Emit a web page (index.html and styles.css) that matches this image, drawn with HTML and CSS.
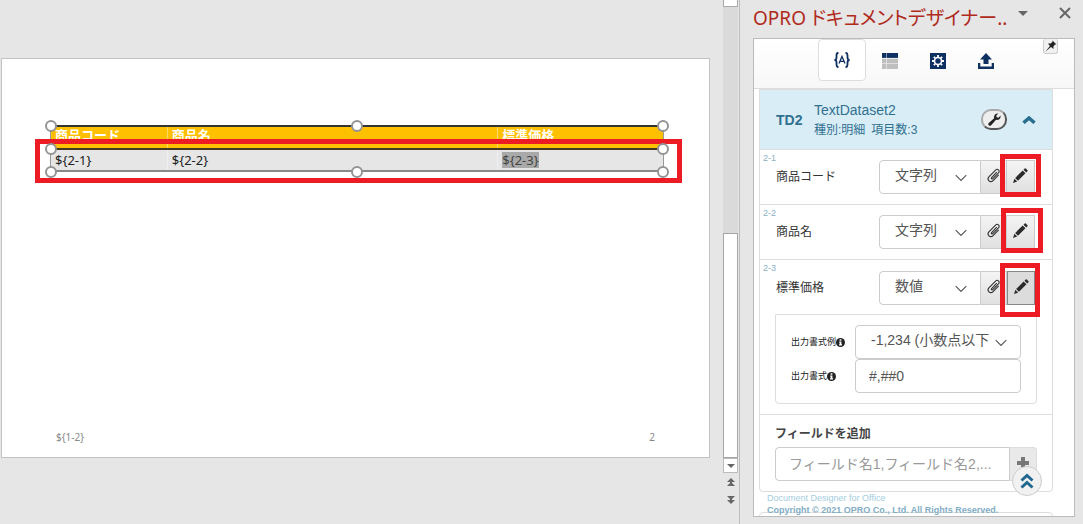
FILE: index.html
```html
<!DOCTYPE html>
<html lang="ja">
<head>
<meta charset="utf-8">
<title>OPRO ドキュメントデザイナー</title>
<link rel="stylesheet" href="styles.css">
</head>
<body>
<svg class="defs" aria-hidden="true">
  <symbol id="clip" viewBox="0 0 16 16"><path d="M11.500 4.500 6 10.200c-.8.9.4 2.100 1.300 1.200l6-6.200c2-2.200-.9-5.200-3.100-3L3.300 9.200c-3 3.200 1.200 7.300 4.300 4.200l5.900-6" fill="none" stroke="#333" stroke-width="1.200"/></symbol>
  <symbol id="pencil" viewBox="0 0 16 16"><path d="M0 16 1.500 11.500 4.500 14.500zM2.300 10.600 10.300 2.700l3 3-8 7.900zM11.200 1.900l1.300-1.300q.6-.6 1.200 0l1.700 1.700q.6.600 0 1.200l-1.300 1.300z" fill="#2b2b2b"/></symbol>
  <symbol id="down" viewBox="0 0 12 8"><path d="M.7 1.200 6 6.500l5.300-5.300" fill="none" stroke="#555" stroke-width="1.100"/></symbol>
  <symbol id="info" viewBox="0 0 10 10"><circle cx="5" cy="5" r="5" fill="#222"/><path d="M4 1.500h2V3H4zM3.500 4H6v3h.7v1.200H3.400V7H4V5.100h-.5z" fill="#fff"/></symbol>
</svg>
<div class="app">
  <main class="editor">
    <section class="slide">
      <div class="table-frame">
        <table class="slide-table">
          <colgroup><col class="col-code"><col class="col-name"><col class="col-price"></colgroup>
          <thead><tr><th>商品コード</th><th>商品名</th><th>標準価格</th></tr></thead>
          <tbody><tr><td>${2-1}</td><td>${2-2}</td><td><span class="selected">${2-3}</span></td></tr></tbody>
        </table>
        <div class="row-mark"></div>
        <i class="handle top left"></i><i class="handle top center"></i><i class="handle top right"></i>
        <i class="handle middle left"></i><i class="handle middle right"></i>
        <i class="handle bottom left"></i><i class="handle bottom center"></i><i class="handle bottom right"></i>
      </div>
      <footer class="slide-footer"><span>${1-2}</span><span>2</span></footer>
    </section>
  </main>
  <div class="scrollbar">
    <button class="scroll-up" aria-label="上へ"></button>
    <div class="track"></div>
    <div class="thumb"></div>
    <button class="scroll-down" aria-label="下へ"><svg width="8" height="4"><path d="M0 0h8L4 4z" fill="#666"/></svg></button>
    <button class="scroll-page" aria-label="前のスライド"><svg width="8" height="8"><path d="M4 0 8 4H0zM4 4l4 4H0zM3 3h2v3H3z" fill="#666"/></svg></button>
    <button class="scroll-page" aria-label="次のスライド"><svg width="8" height="8"><path d="M0 0h8L4 4zM0 4h8L4 8zM3 2h2v3H3z" fill="#666"/></svg></button>
  </div>
  <aside class="pane">
    <header class="pane-head">
      <h1 class="pane-title">OPRO ドキュメントデザイナー..</h1>
      <button class="plain pane-menu" aria-label="メニュー"><svg width="10" height="5"><path d="M0 0h10L5 5z" fill="#666"/></svg></button>
      <button class="plain" aria-label="閉じる"><svg width="12" height="12"><path d="m1 1 10 10m0-10L1 11" stroke="#666" stroke-width="2"/></svg></button>
    </header>
    <div class="panel">
      <nav class="tabs">
        <button class="tab active" aria-label="フィールド"><svg width="16" height="16" viewBox="0 0 16 16" fill="none" stroke="#0e3162"><path d="M4.500.8C2.500.8 2.500 2 2.500 3.500v2C2.500 7 2 8 .4 8c1.600 0 2.100 1 2.100 2.500v2c0 1.500 0 2.700 2 2.700M11.500.8c2 0 2 1.200 2 2.700v2c0 1.500.5 2.500 2.100 2.500-1.600 0-2.100 1-2.100 2.500v2c0 1.500 0 2.700-2 2.700" stroke-width="1.800"/><path d="M5 11.500 8 4.500l3 7M6 9.300h4" stroke-width="1.300"/></svg></button>
        <button class="tab" aria-label="一覧"><svg width="16" height="16" viewBox="0 0 16 16"><path d="M0 0h16v5H0z" fill="#0e3162"/><path d="M0 5.500h16V16H0z" fill="#bfbfbf"/><path d="M4.500 0v16M0 5.300h16M0 10.500h16" stroke="#fff" stroke-opacity=".7" stroke-width=".7"/></svg></button>
        <button class="tab" aria-label="設定"><svg width="16" height="16" viewBox="0 0 16 16"><path d="M0 0h16v16H0z" fill="#0e3162"/><circle cx="8" cy="8" r="3.500" fill="none" stroke="#fff" stroke-width="1.600"/><path d="M8 2v2M8 12v2M2 8h2M12 8h2M3.800 3.800l1.400 1.400M10.800 10.800l1.400 1.400M12.200 3.800l-1.400 1.400M5.200 10.800l-1.400 1.400" stroke="#fff" stroke-width="1.800"/></svg></button>
        <button class="tab" aria-label="アップロード"><svg width="16" height="16" viewBox="0 0 16 16" fill="#0e3162"><path d="M8 0l6 6.500h-3.500V11h-5V6.500H2zM0 10h2.300v3.500h11.400V10H16v6H0z"/></svg></button>
        <button class="pin" aria-label="固定"><svg width="12" height="12" viewBox="0 0 12 12"><path d="M7.500.5 11.500 4.500 10 4.600 8.400 6.500 8.500 9 6 7.100.5 11.500 4.900 6 3 3.500 5.500 3.600 7.400 2z" fill="#222"/></svg></button>
      </nav>
      <section class="card">
        <header class="card-head">
          <strong class="card-code">TD2</strong>
          <div class="card-info"><div class="card-name">TextDataset2</div><div class="card-meta">種別:明細&ensp;項目数:3</div></div>
          <button class="wrench" aria-label="設定"><svg width="13" height="13" viewBox="0 0 12 12"><path d="M.7 9.300 5.700 4.800C5 2.300 7 .1 9.600.5L7.700 2.400 8 4l1.600.3 2-1.900c.4 2.600-1.700 4.500-4.200 3.900L2.900 11.300C1.500 12.700-.7 10.700.7 9.300z" fill="#222"/></svg></button>
          <button class="plain toggle" aria-label="折りたたむ"><svg width="14" height="8" viewBox="0 0 14 8"><path d="M1.500 6.800 7 2l5.500 4.800" fill="none" stroke="#2a6f91" stroke-width="3.500"/></svg></button>
        </header>
        <div class="field">
          <span class="field-no">2-1</span>
          <label class="field-name" for="type1">商品コード</label>
          <div class="group"><div class="select-box"><select id="type1"><option>文字列</option></select><svg class="arrow"><use href="#down"/></svg></div><button class="tool clip" aria-label="添付"><svg><use href="#clip"/></svg></button><button class="tool edit" aria-label="編集"><svg><use href="#pencil"/></svg></button><i class="mark"></i></div>
        </div>
        <div class="field">
          <span class="field-no">2-2</span>
          <label class="field-name" for="type2">商品名</label>
          <div class="group"><div class="select-box"><select id="type2"><option>文字列</option></select><svg class="arrow"><use href="#down"/></svg></div><button class="tool clip" aria-label="添付"><svg><use href="#clip"/></svg></button><button class="tool edit" aria-label="編集"><svg><use href="#pencil"/></svg></button><i class="mark mark-wide"></i></div>
        </div>
        <div class="field">
          <span class="field-no">2-3</span>
          <label class="field-name" for="type3">標準価格</label>
          <div class="group"><div class="select-box"><select id="type3"><option>数値</option></select><svg class="arrow"><use href="#down"/></svg></div><button class="tool clip" aria-label="添付"><svg><use href="#clip"/></svg></button><button class="tool edit pressed" aria-label="編集"><svg><use href="#pencil"/></svg></button><i class="mark mark-tall"></i></div>
        </div>
        <div class="format">
          <label class="format-label" for="sample">出力書式例<svg><use href="#info"/></svg></label>
          <div class="select-box"><select id="sample"><option>-1,234 (小数点以下</option></select><svg class="arrow"><use href="#down"/></svg></div>
          <label class="format-label" for="format">出力書式<svg><use href="#info"/></svg></label>
          <input id="format" class="text" type="text" value="#,##0">
        </div>
        <div class="add">
          <label class="add-label" for="new-field">フィールドを追加</label>
          <div class="add-row"><input id="new-field" class="text" type="text" placeholder="フィールド名1,フィールド名2,..."><button class="plus" aria-label="追加"><svg width="12" height="12"><path d="M4 0h4v4h4v4H8v4H4V8H0V4h4z" fill="#777"/></svg></button></div>
        </div>
      </section>
      <section class="card next"></section>
      <footer class="copyright"><a href="#">Document Designer for Office</a><strong>Copyright © 2021 OPRO Co., Ltd. All Rights Reserved.</strong></footer>
      <button class="to-top" aria-label="先頭へ"><svg width="14" height="16" viewBox="0 0 14 16"><path d="m1.500 7.500 5.500-5 5.500 5M1.500 14.500l5.500-5 5.500 5" fill="none" stroke="#20688f" stroke-width="3"/></svg></button>
    </div>
  </aside>
</div>
</body>
</html>
```

FILE: styles.css
```css
* { box-sizing: border-box; }
body { margin: 0; background: #e6e6e6; color: #333; font: 12px/18px "Liberation Sans", "Noto Sans CJK JP", sans-serif; }
button, input, select { font: inherit; color: inherit; margin: 0; }
button { padding: 0; display: flex; align-items: center; justify-content: center; }
svg { display: block; }
.defs { position: absolute; width: 0; height: 0; }
.app { display: flex; height: 100vh; overflow: hidden; }

.editor { flex: 1; min-width: 0; padding: 58px 13px 0 1px; }
.slide { display: flex; flex-direction: column; min-height: 400px; padding: 66px 45px 11px 48px; background: #fff; border: 1px solid #c3c3c3; }
.table-frame { position: relative; border-left: 1px solid #999; border-right: 1px solid #999; }
.slide-table { width: 100%; border-collapse: collapse; table-layout: fixed; font: 13px/16px "Noto Sans", "Noto Sans CJK JP", sans-serif; color: #222; }
.col-code { width: 19%; }
.col-name { width: 54%; }
.col-price { width: 27%; }
.slide-table th, .slide-table td { padding: 0 4px; text-align: left; border-left: 1px solid #ffffff66; }
.slide-table th:first-child, .slide-table td:first-child { border-left: 0; }
.slide-table th { height: 23px; background: #ffc000; color: #fff; font-weight: 700; vertical-align: top; border-top: 2px solid #333; }
.slide-table td { height: 22px; background: #e6e6e6; border-top: 2px solid #443a20; border-bottom: 2px solid #888; }
.selected { display: inline-block; background: #a9a9a9; color: #444; }
.row-mark { position: absolute; left: -16px; right: -19px; top: 14px; height: 44px; border: 5px solid #ed1c24; }
.handle { position: absolute; width: 12px; height: 12px; margin: -6px; border: 2px solid #949494; border-radius: 50%; background: #fff; }
.top { top: 1px; }
.middle { top: 50%; }
.bottom { top: 100%; }
.left { left: 0; }
.center { left: 50%; }
.handle.right { left: 100%; }
.slide-footer { display: flex; justify-content: space-between; margin-top: auto; padding: 0 9px 0 6px; font: 10px/18px "Noto Sans", sans-serif; color: #888; }

.scrollbar { width: 16px; padding-right: 1px; display: flex; flex-direction: column; flex: none; }
.scrollbar button { border: 0; background: none; }
.scrollbar .scroll-up { height: 7px; border: 1px solid #aaa; border-top: 0; background: #fff; }
.track { height: 226px; background: #dadada; }
.thumb { height: 225px; background: #fff; border: 1px solid #a6a6a6; }
.scrollbar .scroll-down { height: 15px; border: 1px solid #bbb; background: #fff; }
.scroll-page { height: 18px; }

.pane { flex: none; width: 344px; border-left: 1px solid #bdbdbd; display: flex; flex-direction: column; padding: 0 8px 7px 13px; }
.pane-head { display: flex; height: 38px; padding-right: 4px; align-items: flex-start; }
.pane-title { flex: 1; margin: 0; color: #b02a1c; font: 19px/36px "Noto Sans", "Noto Sans CJK JP", sans-serif; font-feature-settings: "palt"; white-space: nowrap; }
.plain { border: 0; background: none; }
.pane-head .plain { height: 26px; }
.pane-menu { margin-right: 31px; }
.panel { position: relative; flex: 1; min-height: 0; overflow: hidden; background: #fff; border: 1px solid #bbb; }
.tabs { display: flex; justify-content: center; height: 50px; background: linear-gradient(#fff, #f7f7f7); border-bottom: 1px solid #ddd; }
.tab { width: 48px; height: 42px; margin-top: 1px; border: 1px solid transparent; border-radius: 4px; background: none; }
.tab.active { margin-top: 0; height: 42px; border-color: #ddd; background: #fff; }
.pin { position: absolute; right: 16px; top: 0; width: 15px; height: 15px; border: 1px solid #ccc; border-top: 0; border-radius: 3px; background: #f1f1f1; }

.card { margin: 0 21px 0 5px; border: 1px solid #ddd; border-radius: 0 0 4px 4px; }
.card-head { display: flex; align-items: center; height: 60px; padding: 0 16px; background: #d9edf7; color: #31708f; border-bottom: 1px solid #ddd; }
.card-code { width: 38px; font-size: 14px; }
.card-info { flex: 1; }
.card-name { font-size: 14px; line-height: 20px; }
.card-meta { line-height: 20px; }
.wrench { width: 26px; height: 21px; border: 2px outset #aaa; border-radius: 10px; background: #eee; }
.toggle { margin-left: 15px; }

.field { position: relative; display: flex; align-items: center; justify-content: space-between; height: 55px; padding: 0 17px 0 16px; border-bottom: 1px solid #ddd; }
.field:nth-of-type(3) { border-bottom: 0; }
.field-no { position: absolute; left: 3px; top: 2px; font-size: 9px; line-height: 12px; color: #8ab0c6; }
.group { position: relative; display: flex; width: 156px; }
.select-box { position: relative; flex: 1; min-width: 0; }
.select-box select, .text { display: block; width: 100%; height: 34px; border: 1px solid #ccc; border-radius: 4px; background: #fff; color: #555; font-size: 14px; }
.select-box select { appearance: none; padding: 0 28px 4px 15px; }
.text { padding: 0 13px; min-width: 0; }
.text::placeholder { color: #999; opacity: 1; }
.group select { border-radius: 4px 0 0 4px; }
.arrow { position: absolute; right: 14px; top: 14px; width: 12px; height: 8px; pointer-events: none; }
.tool { height: 34px; padding-bottom: 3px; border: 1px solid #ccc; border-left: 0; background: linear-gradient(#f4f4f4, #e0e0e0); }
.tool svg { width: 15px; height: 15px; }
.clip { width: 26px; }
.edit { width: 28px; }
.pressed { border: 1px solid #888; background: #dcdcdc; }
.mark { position: absolute; right: -6px; top: -6px; width: 41px; height: 43px; border: 5px solid #ed1c24; }
.mark-wide { right: -8px; top: -7px; width: 42px; height: 45px; }
.mark-tall { right: -5px; top: -8px; width: 40px; height: 54px; }

.format { display: grid; grid-template-columns: 64px 1fr; align-items: center; margin: -1px 15px 10px; padding: 10px 15px 10px 15px; border: 1px solid #ddd; border-radius: 0 0 4px 4px; }
.format-label { display: flex; align-items: center; font-size: 9px; white-space: nowrap; color: #222; }
.format-label svg { width: 9px; height: 9px; }
.add { border-top: 1px solid #ddd; padding: 10px 15px 10px; }
.add-label { display: block; margin-bottom: 4px; font-weight: 700; color: #444; }
.add-row { display: flex; }
.add-row .text { flex: 1; border-radius: 4px 0 0 4px; }
.plus { width: 27px; height: 34px; padding-bottom: 2px; border: 1px solid #ddd; border-left: 0; border-radius: 0 4px 4px 0; background: #e9e9e9; }
.next { height: 30px; margin-top: 20px; border-radius: 4px; }
.copyright { position: absolute; left: 13px; bottom: 0; display: flex; flex-direction: column; font-size: 9px; line-height: 12px; color: #82aec5; }
.copyright a { color: #a5cde0; text-decoration: none; }
.to-top { position: absolute; right: 32px; bottom: 20px; width: 30px; height: 30px; border: 1px solid #ccc; border-radius: 50%; background: #f1f1f1; }
```
